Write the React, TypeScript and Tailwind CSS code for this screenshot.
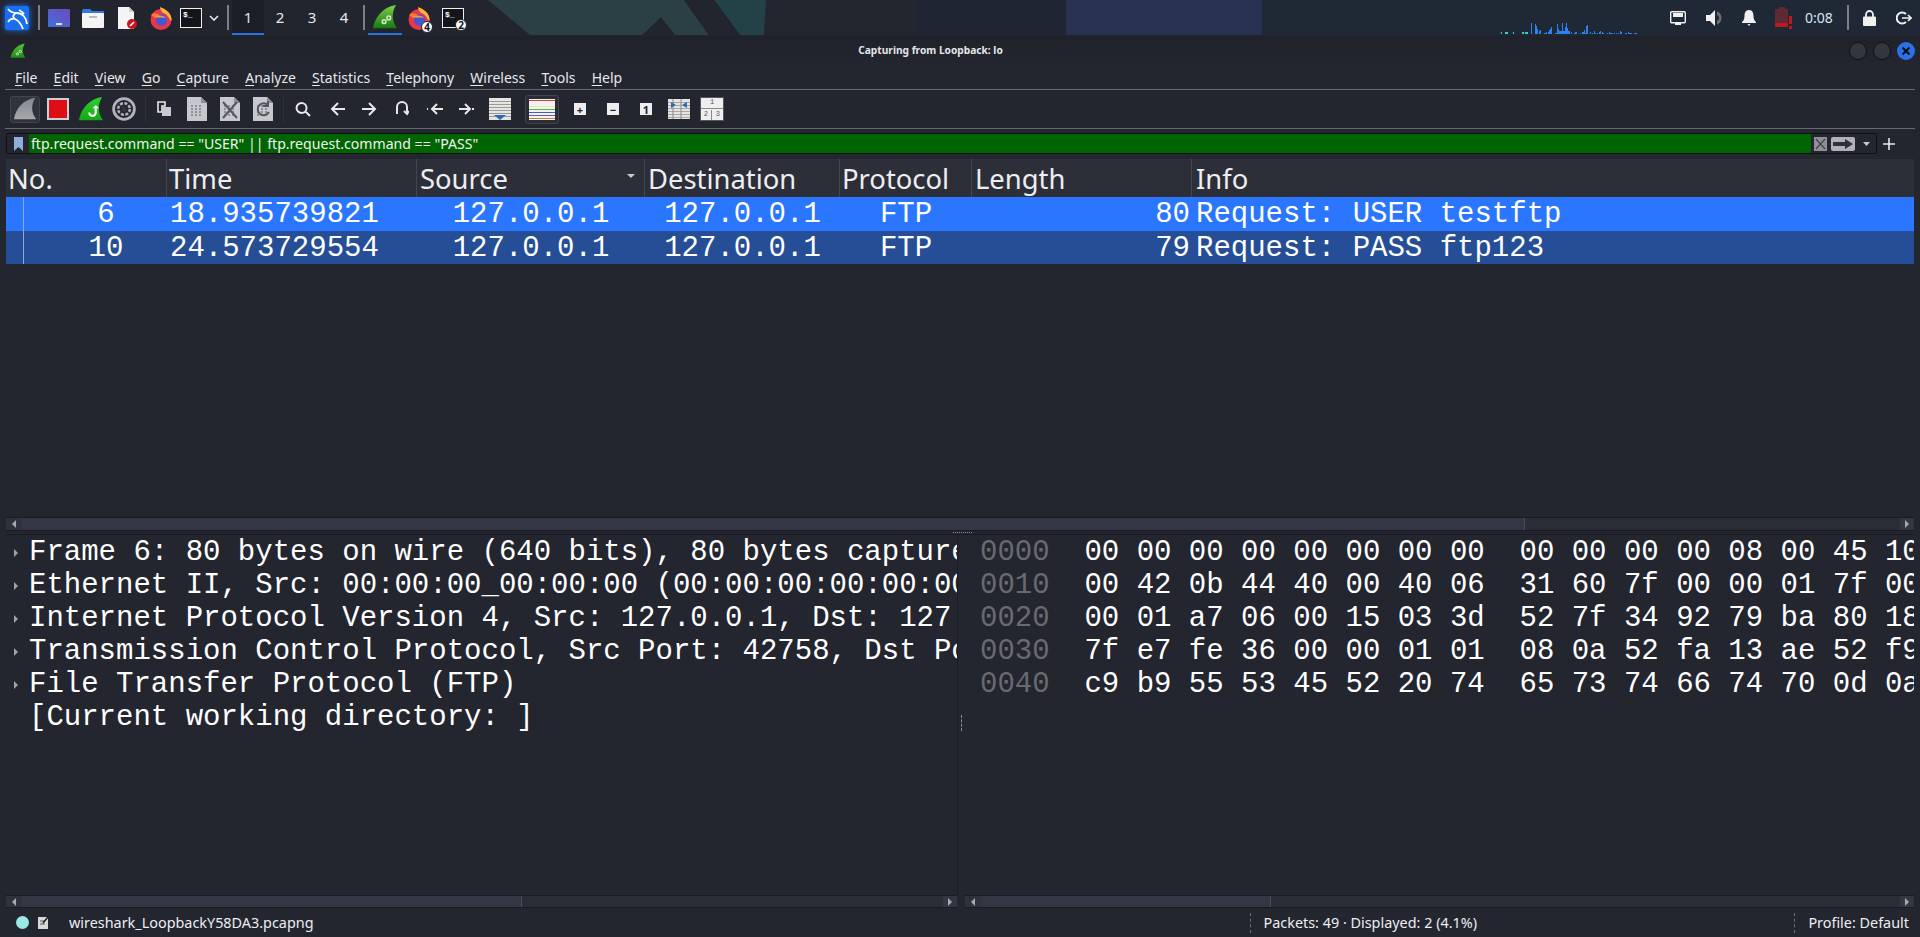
const mono = "font-['Liberation_Mono',monospace]";

const graphBars: [number, number, string][] = [
  [22, 2, "#2dd4bf"], [26, 2, "#2dd4bf"], [27, 2, "#2dd4bf"], [28, 2, "#2dd4bf"], [34, 2, "#2dd4bf"],
  [43, 2, "#2dd4bf"], [44, 2, "#2dd4bf"], [46, 2, "#2dd4bf"], [47, 2, "#2dd4bf"], [48, 2, "#2dd4bf"],
  [52, 11, "#2b82f0"], [56, 10, "#2b82f0"], [57, 8, "#2b82f0"], [58, 5, "#2b82f0"], [60, 3, "#2b82f0"],
  [61, 4, "#2b82f0"], [65, 1, "#2b82f0"], [66, 1, "#2b82f0"], [67, 2, "#2b82f0"], [69, 2, "#2b82f0"],
  [70, 4, "#2b82f0"], [71, 5, "#2b82f0"], [72, 7, "#2b82f0"], [76, 1, "#2b82f0"], [77, 1, "#2b82f0"],
  [78, 10, "#2b82f0"], [79, 5, "#2b82f0"], [80, 3, "#2b82f0"], [81, 3, "#2b82f0"], [82, 3, "#2b82f0"],
  [83, 11, "#2b82f0"], [84, 3, "#2b82f0"], [85, 3, "#2b82f0"], [86, 7, "#2b82f0"], [87, 11, "#2b82f0"],
  [88, 6, "#2b82f0"], [89, 3, "#2b82f0"], [90, 3, "#2b82f0"], [92, 2, "#2b82f0"], [95, 1, "#2b82f0"],
  [96, 2, "#2b82f0"], [97, 2, "#2b82f0"], [101, 1, "#2b82f0"], [103, 2, "#2b82f0"], [104, 2, "#2b82f0"],
  [105, 4, "#2b82f0"], [106, 1, "#2b82f0"], [107, 8, "#2b82f0"], [108, 9, "#2b82f0"], [111, 2, "#2b82f0"],
  [113, 1, "#2b82f0"], [115, 3, "#2b82f0"], [116, 1, "#2b82f0"], [118, 1, "#2b82f0"], [120, 2, "#2b82f0"],
  [121, 3, "#2b82f0"], [123, 2, "#2b82f0"], [124, 1, "#2b82f0"], [128, 1, "#2b82f0"], [130, 2, "#2b82f0"],
  [131, 1, "#2b82f0"], [132, 1, "#2b82f0"], [133, 1, "#2b82f0"], [135, 1, "#2b82f0"], [137, 1, "#2b82f0"],
  [139, 1, "#2b82f0"], [141, 3, "#2b82f0"], [142, 2, "#2b82f0"], [146, 1, "#2b82f0"], [147, 1, "#2b82f0"],
  [149, 2, "#2b82f0"], [150, 1, "#2b82f0"], [151, 1, "#2b82f0"], [152, 1, "#2b82f0"], [155, 1, "#2b82f0"],
  [156, 1, "#2b82f0"], [157, 1, "#2b82f0"],
];

const hexRows = [
  ["0000", "00 00 00 00 00 00 00 00  00 00 00 00 08 00 45 10"],
  ["0010", "00 42 0b 44 40 00 40 06  31 60 7f 00 00 01 7f 00"],
  ["0020", "00 01 a7 06 00 15 03 3d  52 7f 34 92 79 ba 80 18"],
  ["0030", "7f e7 fe 36 00 00 01 01  08 0a 52 fa 13 ae 52 f9"],
  ["0040", "c9 b9 55 53 45 52 20 74  65 73 74 66 74 70 0d 0a"],
];

// cut where the pane cuts them in the capture
const treeRows = [
  "Frame 6: 80 bytes on wire (640 bits), 80 bytes capture",
  "Ethernet II, Src: 00:00:00_00:00:00 (00:00:00:00:00:00",
  "Internet Protocol Version 4, Src: 127.0.0.1, Dst: 127",
  "Transmission Control Protocol, Src Port: 42758, Dst Po",
  "File Transfer Protocol (FTP)",
];

const menus = ["File", "Edit", "View", "Go", "Capture", "Analyze", "Statistics", "Telephony", "Wireless", "Tools", "Help"];

const Fin = ({ size, from, to, gears }: { size: number; from: string; to: string; gears?: boolean }) => (
  <svg width={size} height={size} viewBox="0 0 28 28" className="shrink-0">
    <defs>
      <linearGradient id={`fin${from.slice(1)}`} x1="0" y1="0" x2="0" y2="1">
        <stop offset="0" stopColor={from} />
        <stop offset="1" stopColor={to} />
      </linearGradient>
    </defs>
    <path d="M1 26 C3 14 12 3 26 1 C21 9 21 18 27 26 Z" fill={`url(#fin${from.slice(1)})`} />
    {gears && (
      <g fill="none" stroke="#d7e8c8" strokeWidth="1.6">
        <circle cx="13" cy="19" r="2" />
        <circle cx="18" cy="15" r="2" />
      </g>
    )}
  </svg>
);

const Firefox = () => (
  <svg width="22" height="24" viewBox="0 0 22 24" className="shrink-0">
    <circle cx="11" cy="13.5" r="10.5" fill="#e8364a" />
    <path d="M10 1 C16 3 22 8 21.5 14 C21 18 19 8 13 7 C11 5 10 3 10 1Z" fill="#fcb33a" />
    <path d="M1 9 C3 7 6 7 8 8 L11 10 L5 12Z" fill="#ff7a2a" />
    <circle cx="11.5" cy="14" r="5.5" fill="#3d58d8" />
    <path d="M5 11 C8 9 13 9 16 12 C12 11 8 12 5 11Z" fill="#ff9a2e" />
  </svg>
);

const TerminalIcon = () => (
  <div className={`w-[22px] h-[20px] bg-[#14151a] border border-[#f0f0f0] text-white text-[8px] leading-[10px] font-bold pl-[2px] pt-[1px] ${mono}`}>
    $_
  </div>
);

const Badge = ({ n }: { n: number }) => (
  <span className="absolute -right-[3px] -bottom-[3px] w-[12px] h-[12px] rounded-full bg-white border border-[#22242e] text-[#14151a] text-[10px] leading-[11px] font-bold text-center font-['Noto_Sans',sans-serif]">
    {n}
  </span>
);

const BarSep = ({ className }: { className: string }) => <div className={`w-[2px] h-[25px] bg-[#7d7f85] shrink-0 ${className}`} />;

const Wallpaper = () => (
  <svg className="absolute left-0 top-0" width="1920" height="35" viewBox="0 0 1920 35">
    <rect width="1920" height="35" fill="#22242e" />
    <rect x="765" width="695" height="35" fill="#23252f" />
    <rect x="916" width="150" height="35" fill="#1f2532" />
    <rect x="1066" width="196" height="35" fill="#26324f" />
    <rect x="1262" width="658" height="35" fill="#1f2935" />
    <polygon points="488,0 684,0 709,35 530,35" fill="#2a4045" />
    <polygon points="714,0 766,0 764,35 740,35" fill="#234248" />
    <polygon points="684,0 714,0 740,35 709,35" fill="#22242e" />
    <polygon points="642,35 661,17 675,35" fill="#22242e" />
  </svg>
);

const TaskBar = () => (
  <div className="relative h-[35px] overflow-hidden shrink-0 bg-[#22242e]">
    <Wallpaper />
    <div className="relative flex items-center h-full pl-[5px] pr-[8px] text-[#e8eaf0] font-['Noto_Sans',sans-serif]">
      <svg width="24" height="24" viewBox="0 0 24 24" className="shrink-0 rounded-[2px] bg-[#1a6ff0] shadow-[0_0_6px_#1a6ff0]">
        <path d="M3 3 C6 7 10 7 12 7 C17 7 21 11 22 18 M12 7 C8 8 7 11 10 13 C14 15 16 17 18 23 M10 13 C7 12 5 13 3 16 M14 4 C16 5 18 6 19 8" fill="none" stroke="#fff" strokeWidth="1.8" />
      </svg>
      <BarSep className="ml-[9px]" />
      <div className="ml-[8px] w-[22px] h-[18px] rounded-[1px] bg-gradient-to-tr from-[#3c6ee0] to-[#6a4ab8] flex items-end justify-center pb-[2px]">
        <div className="w-[6px] h-[2px] bg-white/80" />
      </div>
      <svg width="22" height="20" viewBox="0 0 22 20" className="ml-[12px] shrink-0">
        <path d="M0 3 Q0 1 2 1 H8 L10 3 H22 V7 H0Z" fill="#2f7ae0" />
        <rect y="5" width="22" height="15" rx="1" fill="#f4f4f4" />
        <rect x="7" y="8" width="8" height="2" fill="#bbb" />
      </svg>
      <svg width="19" height="22" viewBox="0 0 19 22" className="ml-[14px] shrink-0">
        <path d="M0 0 H11 L16 5 V22 H0Z" fill="#f4f4f4" />
        <path d="M11 0 L16 5 H11Z" fill="#cfcfcf" />
        <circle cx="14" cy="17" r="5" fill="#c8141c" />
        <path d="M12 19 L16 15" stroke="#fff" strokeWidth="1.6" />
      </svg>
      <div className="ml-[13px]"><Firefox /></div>
      <div className="ml-[8px]"><TerminalIcon /></div>
      <svg width="10" height="6" viewBox="0 0 10 6" className="ml-[7px] shrink-0">
        <path d="M1 1 L5 5 L9 1" fill="none" stroke="#e8eaf0" strokeWidth="1.6" />
      </svg>
      <BarSep className="ml-[8px]" />
      <div className="ml-[3px] flex h-full">
        {[1, 2, 3, 4].map((n) => (
          <div key={n} className={`w-[32px] flex items-center justify-center text-[15px] border-b-2 pt-[1px] ${n === 1 ? "bg-[#1c1e27] border-[#2a72e0] text-[#d8e4f4]" : "border-transparent"}`}>
            {n}
          </div>
        ))}
      </div>
      <BarSep className="ml-[3px]" />
      <div className="ml-[3px] w-[34px] h-full flex items-center justify-center border-b-2 border-[#2a72e0]">
        <Fin size={26} from="#7fd04a" to="#157a12" gears />
      </div>
      <div className="ml-[6px] relative"><Firefox /><Badge n={4} /></div>
      <div className="ml-[12px] relative"><TerminalIcon /><Badge n={2} /></div>

      <svg width="160" height="12" viewBox="0 0 160 12" className="ml-auto self-end mb-[1px] shrink-0">
        {graphBars.map(([x, h, c]) => (
          <rect key={x} x={x - 20 + 0} y={12 - h} width="1" height={h} fill={c} />
        ))}
      </svg>
      <svg width="16" height="14" viewBox="0 0 16 14" className="ml-[11px] shrink-0">
        <rect x="0.7" y="0.7" width="14.6" height="11" rx="1" fill="none" stroke="#f0f0f0" strokeWidth="1.4" />
        <path d="M3 2 H13 V6 H3Z M5 12 H11 V14 H5Z" fill="#f0f0f0" />
      </svg>
      <svg width="17" height="16" viewBox="0 0 17 16" className="ml-[20px] shrink-0">
        <path d="M0 5 H4 L9 0 V16 L4 11 H0Z" fill="#f0f0f0" />
        <path d="M11 1.5 A7 7 0 0 1 11 14.5 Z" fill="#6b6f78" />
        <path d="M11 5 A3.2 3.2 0 0 1 11 11 Z" fill="#22242e" />
      </svg>
      <svg width="14" height="16" viewBox="0 0 14 16" className="ml-[19px] shrink-0">
        <path d="M7 0 C10.5 0 11.5 3 11.5 6 C11.5 9 12.5 11 14 12 V13 H0 V12 C1.5 11 2.5 9 2.5 6 C2.5 3 3.5 0 7 0Z M5.5 14 H8.5 L7 16Z" fill="#f0f0f0" />
      </svg>
      <div className="ml-[19px] w-[17px] h-[22px] relative shrink-0">
        <div className="absolute left-0 top-[2px] w-[13px] h-[18px] bg-[#5c2a30]" />
        <div className="absolute left-[4px] top-0 w-[6px] h-[2px] bg-[#5c2a30]" />
        <div className="absolute left-0 top-[16px] w-[13px] h-[4px] bg-[#c0181e]" />
        <div className="absolute left-[14px] top-[9px] w-[3px] h-[8px] bg-[#c0181e]" />
        <div className="absolute left-[14px] top-[19px] w-[3px] h-[3px] bg-[#c0181e]" />
      </div>
      <span className="ml-[13px] w-[29px] text-[14px] leading-none text-[#d8e4f4]">0:08</span>
      <BarSep className="ml-[13px]" />
      <svg width="13" height="16" viewBox="0 0 13 16" className="ml-[14px] shrink-0">
        <path d="M3 7 V4.5 A3.5 3.5 0 0 1 10 4.5 V7" fill="none" stroke="#f0f0f0" strokeWidth="1.8" />
        <rect y="6.5" width="13" height="9.5" rx="1" fill="#f0f0f0" />
      </svg>
      <svg width="16" height="14" viewBox="0 0 16 14" className="ml-[20px] shrink-0">
        <path d="M10 3 A5.5 5.5 0 1 0 10 11" fill="none" stroke="#f0f0f0" strokeWidth="2" />
        <path d="M6 7 H15 M12 4 L15 7 L12 10" fill="none" stroke="#f0f0f0" strokeWidth="1.6" />
      </svg>
    </div>
  </div>
);

const TitleBar = () => (
  <div className="flex items-center h-[30px] pl-[10px] pr-[5px] bg-gradient-to-b from-[#1f212b] to-[#23252f]">
    <Fin size={16} from="#5cc23a" to="#1a8a18" gears />
    <div className="flex-1 text-center text-[#e4e6ea] text-[10.2px] font-bold pr-[14px] font-['Noto_Sans',sans-serif]">Capturing from Loopback: lo</div>
    <div className="flex gap-[6px]">
      <div className="w-[18px] h-[18px] rounded-full bg-[#33363f] border border-[#0f1014]" />
      <div className="w-[18px] h-[18px] rounded-full bg-[#33363f] border border-[#0f1014]" />
      <div className="w-[18px] h-[18px] rounded-full bg-[#2a72e8] flex items-center justify-center">
        <svg width="10" height="10" viewBox="0 0 10 10"><path d="M1.5 1.5 L8.5 8.5 M8.5 1.5 L1.5 8.5" stroke="#0c0d12" strokeWidth="2" /></svg>
      </div>
    </div>
  </div>
);

const MenuBar = () => (
  <div className="flex items-center h-[23px] pl-[15px] gap-[16.2px] text-[14px] text-[#e6e8ec] font-['Noto_Sans',sans-serif]">
    {menus.map((m) => (
      <span key={m}>
        <span className="underline underline-offset-2">{m[0]}</span>
        {m.slice(1)}
      </span>
    ))}
  </div>
);

const DocIcon = ({ className, mark }: { className: string; mark?: "x" | "r" }) => (
  <svg width="20" height="24" viewBox="0 0 20 24" className={`shrink-0 ${className}`}>
    <path d="M0 0 H14 L20 6 V24 H0Z" fill="#c6c8ce" />
    <path d="M14 0 L20 6 H14Z" fill="#8e9098" />
    <g fill="#8e9098">
      {[8, 11, 14, 17].map((y) => [4, 8, 12].map((x) => <rect key={`${x}-${y}`} x={x} y={y} width="2" height="2" />))}
    </g>
    {mark === "x" && <path d="M3 5 L17 21 M17 5 L3 21" stroke="#55575e" strokeWidth="2" />}
    {mark === "r" && <path d="M15 8 A6 6 0 1 0 16 15 M15 4 V9 H10" fill="none" stroke="#55575e" strokeWidth="2" />}
  </svg>
);

const NavIcon = ({ d, className, w = 16 }: { d: string; className: string; w?: number }) => (
  <svg width={w} height="16" viewBox={`0 0 ${w} 16`} className={`shrink-0 ${className}`}>
    <path d={d} fill="none" stroke="#e8e8e8" strokeWidth="2" />
  </svg>
);

const ZoomBtn = ({ className, children }: { className: string; children: React.ReactNode }) => (
  <div className={`w-[12px] h-[12px] bg-[#eeeeee] flex items-center justify-center text-[#22242e] font-bold text-[11px] leading-none shrink-0 font-['Noto_Sans',sans-serif] ${className}`}>
    {children}
  </div>
);

const ToolSep = ({ className }: { className: string }) => <div className={`w-px h-[26px] bg-[#2e303a] shrink-0 ${className}`} />;

const ToolBar = () => (
  <div className="flex items-center h-[40px] pl-[5px] border-y border-[#686a72] mx-[5px]">
    <div className="w-[30px] h-[27px] rounded-[3px] border border-[#42444e] bg-[#30323c] flex items-center justify-center">
      <Fin size={24} from="#85888f" to="#a5a7ac" />
    </div>
    <div className="ml-[7px] w-[22px] h-[22px] bg-[#dd0f14] border-2 border-[#cfd0d4] shrink-0" />
    <div className="ml-[9px] relative shrink-0">
      <Fin size={26} from="#30d030" to="#14a814" />
      <svg width="13" height="13" viewBox="0 0 12 12" className="absolute left-[8px] top-[9px]">
        <path d="M9 3 V7 A3 3 0 1 1 3 7" fill="none" stroke="#fff" strokeWidth="2" />
        <path d="M6 3 H12 L9 0Z" fill="#fff" />
      </svg>
    </div>
    <svg width="24" height="24" viewBox="0 0 24 24" className="ml-[8px] shrink-0">
      <circle cx="12" cy="12" r="10.4" fill="none" stroke="#b0b2b8" strokeWidth="2.8" />
      <circle cx="12" cy="12" r="5.8" fill="none" stroke="#b0b2b8" strokeWidth="2.6" strokeDasharray="3 1.5" />
      <circle cx="12" cy="12" r="3" fill="#30323c" />
    </svg>
    <ToolSep className="ml-[9px]" />
    <svg width="14" height="16" viewBox="0 0 14 16" className="ml-[11px] shrink-0">
      <path d="M1 1 H8 V5 H5 V11 H1Z" fill="none" stroke="#e8e8e8" strokeWidth="1.6" />
      <rect x="5" y="6" width="9" height="9" fill="#c9cad0" />
    </svg>
    <DocIcon className="ml-[16px]" />
    <DocIcon className="ml-[13px]" mark="x" />
    <DocIcon className="ml-[13px]" mark="r" />
    <ToolSep className="ml-[10px]" />
    <NavIcon className="ml-[11px]" d="M6.5 2 A5 5 0 1 0 6.6 12 A5 5 0 0 0 6.5 2 M10 10 L15 15" />
    <NavIcon className="ml-[19px]" d="M15 8 H2 M8 2 L2 8 L8 14" />
    <NavIcon className="ml-[16px]" d="M0 8 H13 M7 2 L13 8 L7 14" />
    <NavIcon className="ml-[17px]" w={14} d="M2 13 V6 A5 5 0 0 1 12 6 V13 M9 10 L12 13 L14 10" />
    <NavIcon className="ml-[18px]" d="M16 8 H6 M10 3 L5 8 L10 13 M0 7 V9" />
    <NavIcon className="ml-[16px]" d="M0 8 H10 M6 3 L11 8 L6 13 M14 7 V9 " />
    <svg width="22" height="22" viewBox="0 0 22 22" className="ml-[14px] shrink-0">
      <rect width="22" height="22" fill="#e4e4e0" />
      <g fill="#9a9a98">
        {[3, 6, 9, 12, 15, 18].map((y) => <rect key={y} y={y} width="22" height="1" />)}
      </g>
      <path d="M5 17 H17 L11 22Z" fill="#2f68b8" />
    </svg>
    <div className="ml-[14px] w-[34px] h-[29px] rounded-[3px] border border-[#42444e] bg-[#2a2c36] p-[3px] shrink-0">
      <div className="h-full bg-[#f2f2f2] flex flex-col justify-between py-[1px]">
        {["#d83a3a", "#f2f2f2", "#e8e8a0", "#60b040", "#4060c0", "#7a50b0", "#b88a30"].map((c, i) => (
          <div key={i} className="h-px" style={{ backgroundColor: c }} />
        ))}
      </div>
    </div>
    <ZoomBtn className="ml-[15px]">+</ZoomBtn>
    <ZoomBtn className="ml-[21px]">−</ZoomBtn>
    <ZoomBtn className="ml-[21px]">1</ZoomBtn>
    <svg width="22" height="20" viewBox="0 0 22 20" className="ml-[16px] shrink-0">
      <rect width="22" height="20" fill="#e4e4e0" />
      <g fill="#a8a8a6">{[3, 6, 9, 12, 15, 18].map((y) => <rect key={y} y={y} width="22" height="1" />)}</g>
      <path d="M5 0 V20 M13 0 V20" stroke="#8a8a8a" strokeWidth="1" />
      <path d="M3 3 L8 6 L3 9Z M19 3 L14 6 L19 9Z" fill="#2f68b8" />
    </svg>
    <div className={`ml-[10px] w-[24px] h-[24px] bg-[#eeeeee] border border-[#55575e] grid grid-cols-2 grid-rows-2 text-[7px] leading-none text-[#55575e] gap-px shrink-0 ${mono}`}>
      <div className="col-span-2 flex items-center justify-center border-b border-[#8a8a8a]">1</div>
      <div className="flex items-center justify-center border-r border-[#8a8a8a]">2</div>
      <div className="flex items-center justify-center">3</div>
    </div>
  </div>
);

const FilterBar = () => (
  <div className="flex items-center h-[21px] mt-[4px] ml-[6px] mr-[25px] font-['Noto_Sans',sans-serif]">
    <div className="flex items-center flex-1 h-full border border-[#101116] rounded-[2px] pr-[6px]">
      <div className="w-[22px] h-full flex items-center justify-center shrink-0">
        <svg width="9" height="14" viewBox="0 0 9 14"><path d="M0 0 H9 V14 L4.5 10 L0 14Z" fill="#8fb0dc" /></svg>
      </div>
      <div className="flex-1 h-full bg-[#006400] text-[#f2f2f2] text-[14.1px] leading-[19px] pl-[2px]">ftp.request.command == "USER" || ftp.request.command == "PASS"</div>
      <div className="ml-[3px] w-[13px] h-[14px] bg-[#8e9098] flex items-center justify-center shrink-0">
        <svg width="11" height="12" viewBox="0 0 11 12"><path d="M1 1 L10 11 M10 1 L1 11" stroke="#45474e" strokeWidth="1.4" /></svg>
      </div>
      <div className="ml-[4px] w-[24px] h-[14px] rounded-[2px] bg-[#b0b2b8] flex items-center justify-center shrink-0">
        <svg width="20" height="10" viewBox="0 0 20 10"><path d="M0 3 H12 V0 L20 5 L12 10 V7 H0Z" fill="#30323a" /></svg>
      </div>
      <svg width="7" height="4" viewBox="0 0 7 4" className="ml-[8px] shrink-0"><path d="M0 0 H7 L3.5 4Z" fill="#c8cad0" /></svg>
    </div>
    <svg width="12" height="12" viewBox="0 0 12 12" className="ml-[6px] shrink-0"><path d="M6 0 V12 M0 6 H12" stroke="#e8e8e8" strokeWidth="1.6" /></svg>
  </div>
);

const PacketHeader = () => (
  <div className="flex h-[38px] bg-[#2c2e38] text-[#eceef2] text-[27.4px] leading-[40px] font-['Noto_Sans',sans-serif] shrink-0">
    <div className="w-[160px] pl-[2px]">No.</div>
    <div className="w-[250px] pl-[2px] border-l border-[#43454f]">Time</div>
    <div className="w-[228px] pl-[3px] border-l border-[#43454f] relative">
      Source
      <span className="absolute right-[9px] top-[15px] w-0 h-0 border-x-[4px] border-x-transparent border-t-[4px] border-t-[#c8cad0]" />
    </div>
    <div className="w-[195px] pl-[3px] border-l border-[#43454f]">Destination</div>
    <div className="w-[132px] pl-[2px] border-l border-[#43454f]">Protocol</div>
    <div className="w-[220px] pl-[3px] border-l border-[#43454f]">Length</div>
    <div className="flex-1 pl-[4px] border-l border-[#43454f]">Info</div>
  </div>
);

const PacketRow = ({ no, time, len, info, selected }: { no: string; time: string; len: string; info: string; selected?: boolean }) => (
  <div className={`flex text-white text-[29px] whitespace-pre overflow-hidden ${selected ? "h-[34px] leading-[36px] bg-[#2a76fe]" : "h-[33px] leading-[35px] bg-[#254e96]"} ${mono}`}>
    <div className="w-[160px] pl-[40px] text-center relative">
      <span className="absolute left-[17px] top-0 bottom-0 w-px bg-[#8ea8d4]" />
      {no}
    </div>
    <div className="w-[250px] pl-[4px]">{time}</div>
    <div className="w-[228px] pl-[2px] text-center">127.0.0.1</div>
    <div className="w-[195px] pl-[2px] text-center">127.0.0.1</div>
    <div className="w-[132px] pl-[2px] text-center">FTP</div>
    <div className="w-[219px] text-right">{len}</div>
    <div className="flex-1 pl-[6px]">{info}</div>
  </div>
);

const ScrollBar = ({ thumb, className }: { thumb: number; className: string }) => (
  <div className={`flex items-center bg-[#2a2c36] border-y border-[#1b1c23] shrink-0 ${className}`}>
    <div className="w-[16px] h-full flex items-center justify-center bg-[#2f313c] shrink-0">
      <span className="w-0 h-0 border-y-[4px] border-y-transparent border-r-[4px] border-r-[#a8aab0]" />
    </div>
    <div className="h-full bg-[#343743] border-r border-[#4a4c58] shrink-0" style={{ width: thumb }} />
    <div className="flex-1" />
    <div className="w-[14px] h-full flex items-center justify-center bg-[#343743] shrink-0">
      <span className="w-0 h-0 border-y-[4px] border-y-transparent border-l-[4px] border-l-[#a8aab0]" />
    </div>
  </div>
);

const TreeRow = ({ text, arrow = true }: { text: string; arrow?: boolean }) => (
  <div className="flex items-center h-[33px] whitespace-pre overflow-hidden">
    <div className="w-[23px] flex pl-[8px] shrink-0">
      {arrow && <span className="w-0 h-0 border-y-[4px] border-y-transparent border-l-[4px] border-l-[#a0a2a8]" />}
    </div>
    <span className="leading-[33px]">{text}</span>
  </div>
);

const BottomPanes = () => (
  <div className={`flex-1 flex min-h-0 text-white text-[29px] ${mono}`}>
    <div className="w-[951px] overflow-hidden shrink-0 pt-px">
      {treeRows.map((t) => <TreeRow key={t} text={t} />)}
      <TreeRow text="[Current working directory: ]" arrow={false} />
    </div>
    <div className="w-[8px] shrink-0 flex flex-col items-center border-l border-[#1b1c23]">
      <div className="h-[180px]" />
      <div className="h-[16px] border-l border-dashed border-[#8a8c94]" />
    </div>
    <div className="flex-1 min-w-0 overflow-hidden pl-[15px] pt-px">
      {hexRows.map(([off, hex]) => (
        <div key={off} className="h-[33px] leading-[33px] whitespace-pre">
          <span className="text-[#686a70]">{off}</span>
          {"  "}
          {hex}
        </div>
      ))}
    </div>
  </div>
);

const StatusBar = () => (
  <div className="flex items-center h-[29px] text-[14.4px] text-[#eceef2] font-['Noto_Sans',sans-serif] shrink-0">
    <div className="ml-[10px] w-[13px] h-[13px] rounded-full bg-[#9be8e4] shrink-0" />
    <svg width="11" height="13" viewBox="0 0 11 13" className="ml-[9px] shrink-0">
      <rect y="1" width="10" height="12" fill="#d8dad8" />
      <path d="M2 5 H7 M2 8 H7" stroke="#505258" strokeWidth="1" />
      <path d="M5 7 L10 1" stroke="#1c1e24" strokeWidth="1.5" />
    </svg>
    <span className="ml-[20px]">wireshark_LoopbackY58DA3.pcapng</span>
    <span className="ml-[936px] h-[20px] border-l border-dashed border-[#6c6e76]" />
    <span className="ml-[13px]">Packets: 49 · Displayed: 2 (4.1%)</span>
    <span className="ml-auto h-[20px] border-l border-dashed border-[#6c6e76]" />
    <span className="ml-[13px] mr-[5px]">Profile: Default</span>
  </div>
);

export default function App() {
  return (
    <div className="w-[1920px] h-[937px] flex flex-col overflow-hidden bg-[#22242e]">
      <TaskBar />
      <div className="flex-1 flex flex-col min-h-0 bg-[#23252f] rounded-t-md mt-px">
        <TitleBar />
        <MenuBar />
        <ToolBar />
        <FilterBar />
        <div className="flex-1 flex flex-col min-h-0 pl-[6px] pr-[6px] mt-[5px]">
          <PacketHeader />
          <div className="h-[320px] shrink-0">
            <PacketRow no="6" time="18.935739821" len="80" info="Request: USER testftp" selected />
            <PacketRow no="10" time="24.573729554" len="79" info="Request: PASS ftp123" />
          </div>
          <ScrollBar thumb={1503} className="h-[14px]" />
          <div className="relative h-[4px] shrink-0 border-b border-[#1b1c23]">
            <span className="absolute left-[947px] top-[1px] w-[19px] border-t border-dotted border-[#8a8c94]" />
          </div>
          <BottomPanes />
          <div className="flex shrink-0">
            <ScrollBar thumb={500} className="w-[951px] h-[13px]" />
            <div className="w-[8px]" />
            <ScrollBar thumb={290} className="flex-1 h-[13px]" />
          </div>
          <StatusBar />
        </div>
      </div>
    </div>
  );
}
